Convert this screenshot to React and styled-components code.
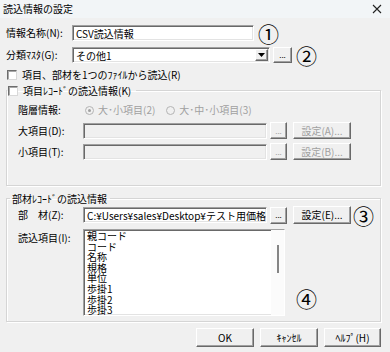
import styled, { createGlobalStyle } from 'styled-components';

//STYLE
const GlobalStyle = createGlobalStyle`
    body{
        margin: 0;
        background: #f0f0f0;
        font-family: "Noto Sans CJK JP", "Liberation Sans", sans-serif;
        font-size: 10px;
        line-height: 12px;
        color: #000;
    }
`;

const Dialog = styled.div`
    width: 390px;
    height: 352px;
    overflow: hidden;
    background: #f0f0f0;
    display: flex;
    flex-direction: column;
`;

const TitleBar = styled.div`
    height: 18px;
    display: flex;
    align-items: center;
    justify-content: space-between;
    padding: 0 8px 0 3px;
    background: #f2f5f7;
`;

const Body = styled.div`
    display: flex;
    flex-direction: column;
    padding: 4px 9px 0 6px;
`;

const Row = styled.div`
    display: flex;
    align-items: center;
    height: ${({ h }) => h || 22}px;
    margin-top: ${({ mt }) => mt || 0}px;
`;

const Label = styled.span`
    width: ${({ w }) => w}px;
    flex-shrink: 0;
    white-space: nowrap;
    margin-top: ${({ mt }) => mt || 0}px;
    color: ${({ disabled }) => (disabled ? '#a0a0a0' : '#000')};
`;

const sunken = `
    box-sizing: border-box;
    border: 1px solid;
    border-color: #a0a0a0 #ffffff #ffffff #a0a0a0;
    box-shadow: inset 1px 1px 0 #696969, inset -1px -1px 0 #e3e3e3;
`;

const TextBox = styled.div`
    ${sunken}
    width: ${({ w }) => w}px;
    height: 16px;
    padding: 1px 3px 0 3px;
    background: ${({ disabled }) => (disabled ? '#f0f0f0' : '#fff')};
    white-space: nowrap;
    overflow: hidden;
    line-height: 13px;
`;

const Combo = styled.div`
    ${sunken}
    width: 198px;
    height: 16px;
    display: flex;
    align-items: stretch;
    background: #fff;
    padding: 1px 1px 1px 3px;
    line-height: 13px;
    span{ flex: 1; }
`;

const raised = `
    box-sizing: border-box;
    border: 1px solid;
    border-color: #ffffff #696969 #696969 #ffffff;
    box-shadow: inset -1px -1px 0 #a0a0a0;
    background: #f0f0f0;
`;

const ComboArrow = styled.div`
    ${raised}
    width: 13px;
    display: flex;
    align-items: center;
    justify-content: center;
    svg{ display: block; }
`;

const Button = styled.div`
    ${raised}
    width: ${({ w }) => w}px;
    height: ${({ h }) => h || 17}px;
    margin-left: ${({ ml }) => ml || 0}px;
    flex-shrink: 0;
    display: flex;
    align-items: center;
    justify-content: center;
    white-space: nowrap;
    font-size: ${({ small }) => (small ? 8 : 10)}px;
    color: ${({ disabled }) => (disabled ? '#a0a0a0' : '#000')};
`;

const Badge = styled.span`
    font-size: 21px;
    line-height: 20px;
    margin-left: ${({ ml }) => ml || 4}px;
    align-self: ${({ end }) => (end ? 'flex-end' : 'center')};
    margin-bottom: ${({ mb }) => mb || 0}px;
`;

const CheckBox = styled.span`
    box-sizing: border-box;
    width: 10px;
    height: 10px;
    margin: 0 5px 0 1px;
    flex-shrink: 0;
    background: #fff;
    border: 1px solid;
    border-color: #6d6d6d #d8d8d8 #d8d8d8 #6d6d6d;
    box-shadow: inset 1px 1px 0 #a8a8a8;
`;

const Check = styled.label`
    display: flex;
    align-items: center;
    white-space: nowrap;
`;

const Group = styled.fieldset`
    margin: ${({ mt }) => mt}px 0 0 0;
    padding: 0 0 ${({ pb }) => pb}px 11px;
    border: 1px solid #d5d5d5;
    box-shadow: inset 1px 1px 0 #fff, 1px 1px 0 #fff;
    min-width: 0;
`;

const Legend = styled.legend`
    margin-left: ${({ ml }) => ml - 11}px;
    padding: 0 ${({ pr }) => pr}px 0 ${({ pl }) => pl}px;
    height: 13px;
    display: flex;
    align-items: center;
    white-space: nowrap;
`;

const Radio = styled.span`
    display: flex;
    align-items: center;
    margin-right: 11px;
    color: #a0a0a0;
    white-space: nowrap;

    .dot{
        box-sizing: border-box;
        width: 9px;
        height: 9px;
        border-radius: 50%;
        border: 1px solid #b4b4b4;
        margin-right: 4px;
        display: flex;
        align-items: center;
        justify-content: center;
    }
    .dot i{
        width: 3px;
        height: 3px;
        border-radius: 50%;
        background: ${({ checked }) => (checked ? '#a0a0a0' : 'transparent')};
    }
`;

const ListRow = styled.div`
    display: flex;
    align-items: flex-start;
    margin-top: 5px;
`;

const ListBox = styled.div`
    ${sunken}
    width: 202px;
    height: 87px;
    background: #fff;
    display: flex;
`;

const ListItems = styled.div`
    flex: 1;
    padding: 1px 0 0 3px;
    font-size: 10px;
    line-height: 10.6px;
    overflow: hidden;
`;

const ScrollTrack = styled.div`
    width: 13px;
    display: flex;
    justify-content: center;
    background: #fbfbfb;

    .thumb{
        width: 2px;
        height: 28px;
        margin-top: 15px;
        background: #858585;
    }
`;

const ButtonBar = styled.div`
    display: flex;
    justify-content: flex-end;
    gap: 6px;
    margin-top: 6px;
`;

const items = ['親コード', 'コード', '名称', '規格', '単位', '歩掛1', '歩掛2', '歩掛3'];

const Ellipsis = ({ disabled, ml = 3, w = 17, h }) => (
    <Button w={w} h={h} ml={ml} small disabled={disabled}>...</Button>
);

const App = () => {
    return (
        <Dialog>
            <GlobalStyle />
            <TitleBar>
                <span>読込情報の設定</span>
                <svg width="10" height="10" viewBox="0 0 10 10">
                    <path d="M1 1 L9 9 M9 1 L1 9" stroke="#222" strokeWidth="1.1" />
                </svg>
            </TitleBar>

            <Body>
                <Row>
                    <Label w={66}>情報名称(N):</Label>
                    <TextBox w={182}>CSV読込情報</TextBox>
                    <Badge>①</Badge>
                </Row>
                <Row>
                    <Label w={66}>分類ﾏｽﾀ(G):</Label>
                    <Combo>
                        <span>その他1</span>
                        <ComboArrow>
                            <svg width="7" height="4" viewBox="0 0 7 4">
                                <path d="M0 0 H7 L3.5 4 Z" fill="#000" />
                            </svg>
                        </ComboArrow>
                    </Combo>
                    <Ellipsis w={19} h={16} />
                    <Badge>②</Badge>
                </Row>
                <Row h={13} mt={2}>
                    <Check>
                        <CheckBox />
                        項目、部材を1つのﾌｧｲﾙから読込(R)
                    </Check>
                </Row>

                <Group mt={3} pb={25}>
                    <Legend ml={0} pl={0} pr={5}>
                        <CheckBox />
                        項目ﾚｺｰﾄﾞの読込情報(K)
                    </Legend>
                    <Row h={14} mt={6}>
                        <Label w={67}>階層情報:</Label>
                        <Radio checked>
                            <span className="dot"><i /></span>
                            大･小項目(2)
                        </Radio>
                        <Radio>
                            <span className="dot"><i /></span>
                            大･中･小項目(3)
                        </Radio>
                    </Row>
                    <Row h={17} mt={5}>
                        <Label w={65}>大項目(D):</Label>
                        <TextBox w={184} disabled />
                        <Ellipsis disabled />
                        <Button w={58} ml={6} disabled>設定(A)...</Button>
                    </Row>
                    <Row h={17} mt={4}>
                        <Label w={65}>小項目(T):</Label>
                        <TextBox w={184} disabled />
                        <Ellipsis disabled />
                        <Button w={58} ml={6} disabled>設定(B)...</Button>
                    </Row>
                </Group>

                <Group mt={6} pb={5}>
                    <Legend ml={3} pl={2} pr={3}>部材ﾚｺｰﾄﾞの読込情報</Legend>
                    <Row h={18} mt={1}>
                        <Label w={65}>部　材(Z):</Label>
                        <TextBox w={184}>C:¥Users¥sales¥Desktop¥テスト用価格表.csv</TextBox>
                        <Ellipsis />
                        <Button w={58} h={18} ml={6}>設定(E)...</Button>
                        <Badge ml={2}>③</Badge>
                    </Row>
                    <ListRow>
                        <Label w={65} mt={3}>読込項目(I):</Label>
                        <ListBox>
                            <ListItems>
                                {items.map((item, index) => (
                                    <div key={index}>{item}</div>
                                ))}
                            </ListItems>
                            <ScrollTrack>
                                <div className="thumb" />
                            </ScrollTrack>
                        </ListBox>
                        <Badge ml={11} end mb={8}>④</Badge>
                    </ListRow>
                </Group>

                <ButtonBar>
                    <Button w={58} h={19}>OK</Button>
                    <Button w={58} h={19}>ｷｬﾝｾﾙ</Button>
                    <Button w={57} h={19}>ﾍﾙﾌﾟ(H)</Button>
                </ButtonBar>
            </Body>
        </Dialog>
    );
};

export default App;
